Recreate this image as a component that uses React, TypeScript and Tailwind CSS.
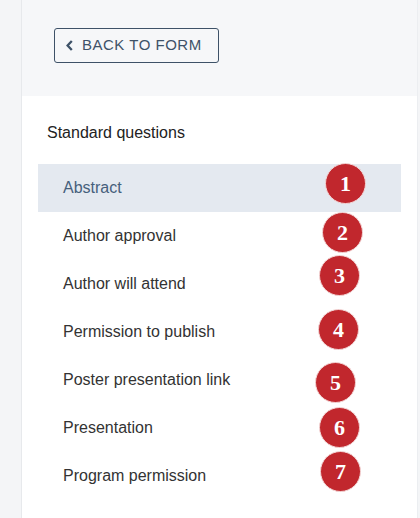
import React from "react";

const rows = [
  "Abstract",
  "Author approval",
  "Author will attend",
  "Permission to publish",
  "Poster presentation link",
  "Presentation",
  "Program permission",
];

const badges = [
  { n: "1", cls: "left-[325px] top-[163px]" },
  { n: "2", cls: "left-[322px] top-[212px]" },
  { n: "3", cls: "left-[319px] top-[255px]" },
  { n: "4", cls: "left-[318px] top-[309px]" },
  { n: "5", cls: "left-[315px] top-[362px]" },
  { n: "6", cls: "left-[319px] top-[407px]" },
  { n: "7", cls: "left-[320px] top-[451px]" },
];

export default function App() {
  return (
    <div
      className="relative w-[420px] h-[518px] flex bg-[#f4f5f7] overflow-hidden"
      style={{ fontFamily: '"Liberation Sans", Arial, sans-serif' }}
    >
      <div className="w-[22px] shrink-0 border-r border-[#e7e9ec]" />
      <div className="w-[396px] shrink-0 flex flex-col bg-white border-r border-[#eceef1]">
        <div className="h-[96px] bg-[#f6f7f9] pt-[28px] pl-[32px]">
          <button className="w-[165px] h-[35px] flex items-center gap-[9px] pl-[11px] border border-[#3e5268] rounded-[3px] text-[#3e5268] text-[15px] tracking-[0.5px] uppercase bg-transparent">
            <svg width="7" height="11" viewBox="0 0 7 11" className="shrink-0">
              <path d="M5.8 1 L1.6 5.5 L5.8 10" fill="none" stroke="#3e5268" strokeWidth="2.3" />
            </svg>
            <span>Back to form</span>
          </button>
        </div>
        <div className="pl-[25px] mt-[25px] h-[24px] leading-[24px] text-[16px] text-[#222]">
          Standard questions
        </div>
        <div className="mt-[19px] pl-[16px] w-[379px] flex flex-col">
          {rows.map((r, i) => (
            <div
              key={r}
              className={
                i === 0
                  ? "h-[48px] flex items-center pl-[25px] bg-[#e4e9f0] text-[16px] text-[#46607c]"
                  : "h-[48px] flex items-center pl-[25px] text-[16px] text-[#333]"
              }
            >
              {r}
            </div>
          ))}
        </div>
      </div>
      {badges.map((b) => (
        <div
          key={b.n}
          className={`absolute ${b.cls} w-[41px] h-[41px] rounded-full bg-[#c1272d] border border-[#f3d6d6] flex items-center justify-center text-white text-[22px] font-bold leading-none`}
          style={{ fontFamily: '"Liberation Serif", "Times New Roman", serif' }}
        >
          {b.n}
        </div>
      ))}
    </div>
  );
}
